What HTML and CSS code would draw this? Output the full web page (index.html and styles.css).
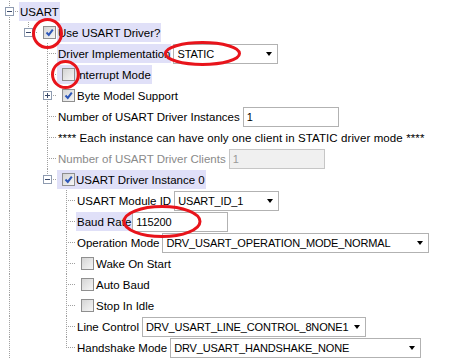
FILE: index.html
```html
<!DOCTYPE html>
<html lang="en">
<head>
<meta charset="UTF-8">
<title>USART</title>
<link rel="stylesheet" href="styles.css">
</head>
<body>
<div class="tree">
  <div class="row">
    <span class="g t"><span class="box minus"></span></span>
    <span class="item sel">USART</span>
  </div>
  <div class="row">
    <span class="g v"></span><span class="g l"><span class="box minus"></span></span>
    <span class="slot"><span class="cb on"></span></span>
    <span class="item sel">Use USART Driver?</span>
  </div>
  <div class="row">
    <span class="g v"></span><span class="g"></span><span class="g t"></span>
    <span class="item sel">Driver Implementation</span>
    <span class="field select w105">STATIC<i class="arrow"></i></span>
  </div>
  <div class="row">
    <span class="g v"></span><span class="g"></span><span class="g t"></span>
    <span class="item sel"><span class="slot"><span class="cb"></span></span>Interrupt Mode</span>
  </div>
  <div class="row">
    <span class="g v"></span><span class="g"></span><span class="g t"><span class="box plus"></span></span>
    <span class="slot"><span class="cb on"></span></span>
    <span class="item">Byte Model Support</span>
  </div>
  <div class="row">
    <span class="g v"></span><span class="g"></span><span class="g t"></span>
    <span class="item">Number of USART Driver Instances</span>
    <span class="field w96">1</span>
  </div>
  <div class="row">
    <span class="g v"></span><span class="g"></span><span class="g t"></span>
    <span class="item wide">**** Each instance can have only one client in STATIC driver mode ****</span>
  </div>
  <div class="row">
    <span class="g v"></span><span class="g"></span><span class="g t"></span>
    <span class="item off">Number of USART Driver Clients</span>
    <span class="field off w96">1</span>
  </div>
  <div class="row">
    <span class="g v"></span><span class="g"></span><span class="g l"><span class="box minus"></span></span>
    <span class="item sel"><span class="slot"><span class="cb on"></span></span>USART Driver Instance 0</span>
  </div>
  <div class="row">
    <span class="g v"></span><span class="g"></span><span class="g"></span><span class="g t"></span>
    <span class="item">USART Module ID</span>
    <span class="field select w105">USART_ID_1<i class="arrow"></i></span>
  </div>
  <div class="row">
    <span class="g v"></span><span class="g"></span><span class="g"></span><span class="g t"></span>
    <span class="item sel">Baud Rate</span>
    <span class="field w96 tight">115200</span>
  </div>
  <div class="row">
    <span class="g v"></span><span class="g"></span><span class="g"></span><span class="g t"></span>
    <span class="item">Operation Mode</span>
    <span class="field select w267">DRV_USART_OPERATION_MODE_NORMAL<i class="arrow"></i></span>
  </div>
  <div class="row">
    <span class="g v"></span><span class="g"></span><span class="g"></span><span class="g t"></span>
    <span class="slot"><span class="cb"></span></span>
    <span class="item">Wake On Start</span>
  </div>
  <div class="row">
    <span class="g v"></span><span class="g"></span><span class="g"></span><span class="g t"></span>
    <span class="slot"><span class="cb"></span></span>
    <span class="item">Auto Baud</span>
  </div>
  <div class="row">
    <span class="g v"></span><span class="g"></span><span class="g"></span><span class="g t"></span>
    <span class="slot"><span class="cb"></span></span>
    <span class="item">Stop In Idle</span>
  </div>
  <div class="row">
    <span class="g v"></span><span class="g"></span><span class="g"></span><span class="g t"></span>
    <span class="item">Line Control</span>
    <span class="field select w224">DRV_USART_LINE_CONTROL_8NONE1<i class="arrow"></i></span>
  </div>
  <div class="row">
    <span class="g v"></span><span class="g"></span><span class="g"></span><span class="g l"></span>
    <span class="item">Handshake Mode</span>
    <span class="field select w251">DRV_USART_HANDSHAKE_NONE<i class="arrow"></i></span>
  </div>
</div>

<!-- red marks drawn on top of the screenshot -->
<svg class="marks" width="457" height="363" viewBox="0 0 457 363">
  <ellipse cx="47.5" cy="33.5" rx="14" ry="14"/>
  <ellipse cx="202.5" cy="53.5" rx="37" ry="11"/>
  <ellipse cx="65.5" cy="74.5" rx="13" ry="13"/>
  <ellipse cx="162" cy="221.5" rx="38" ry="15"/>
</svg>
</body>
</html>
```

FILE: styles.css
```css
:root {
  --dot-v: repeating-linear-gradient(to bottom, #a0a0a0 0 1px, transparent 1px 2px);
  --dot-h: repeating-linear-gradient(to right, #a0a0a0 0 1px, transparent 1px 2px);
}
body {
  margin: 0;
  background: #fff;
  font-family: "Liberation Sans", Arial, sans-serif;
  font-size: 11.5px;
  color: #000;
}
.tree {
  padding-top: 1px;
}
.row {
  display: flex;
  align-items: center;
  height: 21px;
  white-space: nowrap;
}

/* tree guide cells */
.g {
  flex: none;
  width: 19px;
  height: 21px;
  display: flex;
  align-items: center;
  justify-content: flex-start;
}
.g.v { background: var(--dot-v) 9px 0 / 1px 100% no-repeat; }
.g.t {
  background: var(--dot-h) 9px 10px / 10px 1px no-repeat,
              var(--dot-v) 9px 0 / 1px 100% no-repeat;
}
.g.l {
  background: var(--dot-h) 9px 10px / 10px 1px no-repeat,
              var(--dot-v) 9px 0 / 1px 11px no-repeat;
}
.box {
  width: 7px;
  height: 7px;
  margin-left: 5px;
  border: 1px solid #8e9bb0;
  background: #fff;
  position: relative;
}
.box::before {
  content: "";
  position: absolute;
  left: 1px; top: 3px;
  width: 5px; height: 1px;
  background: #3a4a6a;
}
.box.plus::after {
  content: "";
  position: absolute;
  left: 3px; top: 1px;
  width: 1px; height: 5px;
  background: #3a4a6a;
}

/* checkboxes */
.slot {
  flex: none;
  width: 19px;
  height: 19px;
  display: flex;
  align-items: center;
}
.cb {
  width: 11px;
  height: 11px;
  margin-left: 5px;
  border: 1px solid #8f8f8f;
  background: linear-gradient(135deg, #d4d4d4, #f6f6f6);
}
.cb.on {
  background:
    url("data:image/svg+xml,%3Csvg xmlns='http://www.w3.org/2000/svg' width='11' height='11'%3E%3Cpath d='M2.5 5.5l2.3 2.4 4-5.2' fill='none' stroke='%232d56b8' stroke-width='2'/%3E%3C/svg%3E") center / 11px 11px no-repeat,
    linear-gradient(135deg, #d4d4d4, #f6f6f6);
}

/* labels */
.item {
  display: flex;
  align-items: center;
  height: 19px;
  padding: 0 1px;
}
.item .slot { margin-left: -1px; }
.item.wide { letter-spacing: 0.1px; }
.item.sel { background: #e0e0f8; }
.item.off { color: #8a8a8a; }

/* input boxes */
.field {
  flex: none;
  display: flex;
  align-items: center;
  box-sizing: border-box;
  height: 20px;
  margin-left: 2px;
  padding-left: 3px;
  border: 1px solid #b2b2b2;
  background: #fff;
  font-size: 11px;
  letter-spacing: -0.15px;
}
.field.tight { margin-left: 0; }
.field.off {
  background: #f0f0f0;
  border-color: #c6c6c6;
  color: #999;
}
.arrow {
  margin-left: auto;
  margin-right: 5px;
  width: 0;
  height: 0;
  border-left: 3.5px solid transparent;
  border-right: 3.5px solid transparent;
  border-top: 4px solid #000;
}
.w96 { width: 96px; }
.w105 { width: 105px; }
.w224 { width: 224px; }
.w251 { width: 251px; }
.w267 { width: 267px; }

.marks {
  position: absolute;
  left: 0;
  top: 0;
  pointer-events: none;
}
.marks ellipse {
  fill: none;
  stroke: #e8141b;
  stroke-width: 3;
}
```
